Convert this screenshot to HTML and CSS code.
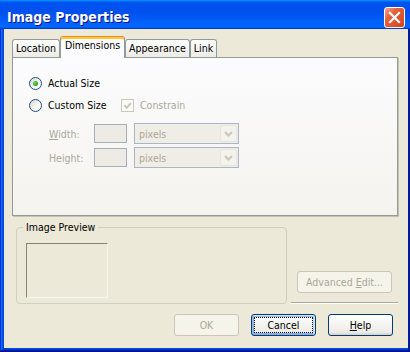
FILE: index.html
```html
<!DOCTYPE html>
<html lang="en">
<head>
    <meta charset="UTF-8">
    <title>Image Properties</title>
    <link rel="stylesheet" href="styles.css">
</head>
<body>
    <div class="window">
        <div class="titlebar">
            <span class="title">Image Properties</span>
            <span class="close">
                <svg width="19" height="19" viewBox="0 0 19 19">
                    <path d="M5 5L14 14M14 5L5 14" stroke="#fff" stroke-width="2.2" stroke-linecap="square"/>
                </svg>
            </span>
        </div>
        <div class="frame">
            <div class="client">
                <div class="tabs">
                    <div class="tab">Location</div>
                    <div class="tab active">Dimensions</div>
                    <div class="tab">Appearance</div>
                    <div class="tab">Link</div>
                </div>

                <div class="panel">
                    <div class="row">
                        <span class="radio checked"></span>
                        <span>Actual Size</span>
                    </div>
                    <div class="row">
                        <span class="radio"></span>
                        <span class="custom">Custom Size</span>
                        <span class="check">
                            <svg width="11" height="11" viewBox="0 0 11 11">
                                <path d="M2.3 5.2l2.4 2.5 4.2-4.6" fill="none" stroke="#c2c0b3" stroke-width="1.7"/>
                            </svg>
                        </span>
                        <span class="muted">Constrain</span>
                    </div>
                    <div class="field first">
                        <span class="lbl muted"><u>W</u>idth:</span>
                        <span class="input"></span>
                        <span class="select">
                            <span>pixels</span>
                            <span class="drop">
                                <svg width="15" height="15" viewBox="0 0 15 15">
                                    <path d="M4 6l3.5 3.5L11 6" fill="none" stroke="#c9c7ba" stroke-width="2"/>
                                </svg>
                            </span>
                        </span>
                    </div>
                    <div class="field second">
                        <span class="lbl muted">Height:</span>
                        <span class="input"></span>
                        <span class="select">
                            <span>pixels</span>
                            <span class="drop">
                                <svg width="15" height="15" viewBox="0 0 15 15">
                                    <path d="M4 6l3.5 3.5L11 6" fill="none" stroke="#c9c7ba" stroke-width="2"/>
                                </svg>
                            </span>
                        </span>
                    </div>
                </div>

                <div class="lower">
                    <fieldset class="preview">
                        <legend>Image Preview</legend>
                        <div class="thumb"></div>
                    </fieldset>
                    <div class="side">
                        <button class="adv" disabled>Advanced <u>E</u>dit...</button>
                        <div class="sep"></div>
                    </div>
                </div>

                <div class="actions">
                    <button disabled>OK</button>
                    <button class="default">Cancel</button>
                    <button><u>H</u>elp</button>
                </div>
            </div>
        </div>
    </div>
</body>
</html>
```

FILE: styles.css
```css
body {
    margin: 0;
    font-family: "DejaVu Sans Condensed", "DejaVu Sans", sans-serif;
    font-size: 10.5px;
    color: #000;
    background: #fff;
}
.window {
    width: 410px;
    height: 352px;
    display: flex;
    flex-direction: column;
}
.titlebar {
    flex: none;
    height: 29px;
    box-sizing: border-box;
    display: flex;
    justify-content: space-between;
    align-items: flex-start;
    padding: 0 5px 0 7px;
    background: linear-gradient(180deg, #0997ff, #0053ee 8%, #0050ee 40%, #06f 88%, #06f 93%, #005bff 95%, #003dd7 96%, #003dd7);
}
.title {
    margin-top: 9px;
    color: #fff;
    font-weight: bold;
    font-size: 14px;
    line-height: 16px;
    text-shadow: 1px 1px #0f1089;
}
.close {
    margin-top: 7px;
    width: 21px;
    height: 21px;
    box-sizing: border-box;
    border: 1px solid #fff;
    border-radius: 3px;
    background: linear-gradient(135deg, #f2a68f 0%, #e2603a 35%, #d2431e 100%);
    display: flex;
}
.frame {
    flex: 1;
    display: flex;
    padding: 0 4px 4px;
    background: #0842e0;
    box-shadow: inset -1px -1px #00138c, inset 1px 0 #0831d9, inset -2px -2px #001ea0, inset 2px 0 #166aee, inset -3px -3px #003bda, inset 3px 0 #0855dd;
}
.client {
    flex: 1;
    display: flex;
    flex-direction: column;
    padding: 7px 10px 0 8px;
    background: #ece9d8;
}

/* tabs */
.tabs {
    display: flex;
    align-items: flex-end;
    height: 21px;
    position: relative;
    z-index: 1;
}
.tab {
    height: 18px;
    box-sizing: border-box;
    padding: 0 3px;
    border: 1px solid #919b9c;
    border-bottom: 0;
    border-radius: 3px 3px 0 0;
    background: linear-gradient(#fff, #ecebe6);
    line-height: 17px;
}
.tab.active {
    height: 22px;
    margin-bottom: -1px;
    padding: 0 4px;
    background: #fcfcfe;
    border-top-color: #e68b2c;
    box-shadow: inset 0 2px #ffc83c;
}
.panel {
    height: 159px;
    box-sizing: border-box;
    border: 1px solid #919b9c;
    background: linear-gradient(#fcfcfe, #f4f3ee);
    box-shadow: 1px 1px 0 #c5c2b2;
    padding: 14px 0 0 16px;
}
.row {
    display: flex;
    align-items: center;
    height: 22px;
}
.radio {
    width: 13px;
    height: 13px;
    box-sizing: border-box;
    margin-right: 6px;
    border: 1px solid #1c5180;
    border-radius: 50%;
    background: linear-gradient(135deg, #dcd9cd, #fff 80%);
    display: flex;
    align-items: center;
    justify-content: center;
}
.radio.checked::after {
    content: "";
    width: 5px;
    height: 5px;
    border-radius: 50%;
    background: radial-gradient(circle at 35% 35%, #63dc5e, #21a121 75%);
}
.custom {
    width: 73px;
}
.check {
    width: 13px;
    height: 13px;
    box-sizing: border-box;
    margin-right: 6px;
    border: 1px solid #cac8bb;
    background: #fbfbf8;
    display: flex;
}
.muted {
    color: #aca899;
}
.field {
    display: flex;
    align-items: center;
    height: 21px;
}
.field.first {
    margin-top: 7px;
}
.field.second {
    margin-top: 3px;
}
.lbl {
    width: 45px;
    margin-left: 20px;
}
.input {
    width: 33px;
    height: 19px;
    box-sizing: border-box;
    margin-right: 7px;
    border: 1px solid #a3afbf;
    background: #edebe3;
}
.select {
    width: 105px;
    height: 21px;
    box-sizing: border-box;
    display: flex;
    align-items: center;
    justify-content: space-between;
    padding-left: 4px;
    border: 1px solid #a9b6c7;
    background: #efede6;
    color: #aca899;
}
.drop {
    width: 17px;
    height: 17px;
    box-sizing: border-box;
    margin-right: 1px;
    border: 1px solid #e6e5de;
    border-radius: 2px;
    background: #f3f2ed;
    display: flex;
}

/* preview and side button */
.lower {
    display: flex;
    align-items: flex-end;
}
.preview {
    flex: none;
    width: 271px;
    box-sizing: border-box;
    margin: 5px 0 0 4px;
    padding: 9px 8px 5px 9px;
    border: 1px solid #d0d0bf;
    border-radius: 4px;
}
.preview legend {
    padding: 0 3px;
    margin-left: -3px;
    line-height: 13px;
}
.thumb {
    width: 82px;
    height: 55px;
    box-sizing: border-box;
    border: 1px solid;
    border-color: #858378 #f7f6f0 #f7f6f0 #858378;
}
.side {
    flex: none;
    width: 107px;
    margin-left: 4px;
}
.sep {
    margin-top: 9px;
    border-top: 1px solid #aca899;
    border-bottom: 1px solid #fff;
}

/* buttons */
button {
    font: inherit;
    width: 65px;
    height: 22px;
    padding: 0;
    border: 1px solid #003c74;
    border-radius: 3px;
    background: linear-gradient(180deg, #fff, #ecebe6 86%, #d6d0c5);
    color: #000;
}
button:disabled {
    border-color: #c9c7ba;
    background: #f5f4ea;
    color: #aca899;
}
.adv {
    width: 95px;
    margin-left: 6px;
}
.default {
    box-shadow: inset -1px 1px #cee7ff, inset 1px 2px #98b8ea, inset -2px 2px #bcd4f6, inset 1px -1px #89ade4, inset 2px -2px #89ade4;
    outline: 1px dotted #000;
    outline-offset: -4px;
}
.actions {
    display: flex;
    justify-content: flex-end;
    gap: 12px;
    margin-top: 10px;
    padding-right: 5px;
}
```
